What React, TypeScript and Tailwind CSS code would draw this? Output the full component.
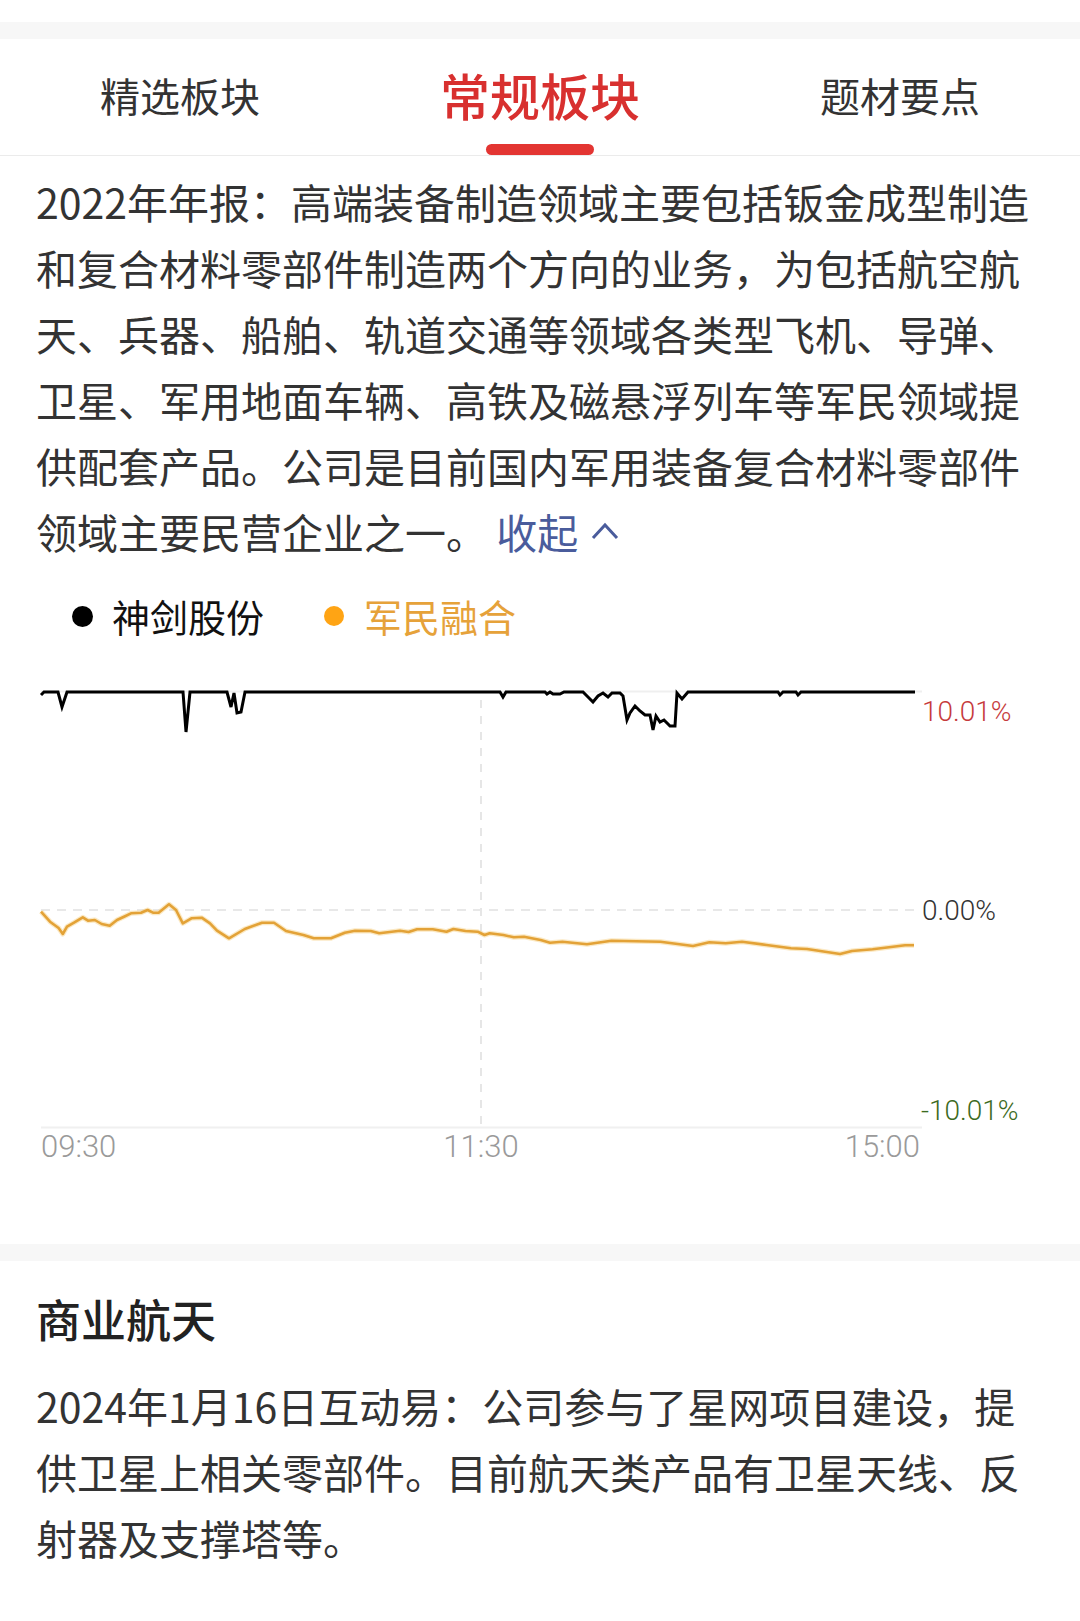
import React from "react";

const TABS = ["精选板块", "常规板块", "题材要点"];

// 神剑股份: pinned at limit-up most of the day, with a few dips
const STOCK: [number, number][] = [
  [41, 695], [44, 692], [58, 692], [62, 707], [67, 692],
  [183, 692], [186, 732], [190, 692],
  [227, 692], [231, 707], [234, 693], [237, 713], [241, 712], [245, 692],
  [500, 692], [503, 697], [506, 692],
  [545, 692], [547, 694], [550, 692], [553, 694], [560, 694], [564, 692],
  [583, 692], [588, 697], [593, 702], [598, 696], [603, 693], [608, 697], [612, 693],
  [620, 693], [623, 696], [627, 720], [630, 713], [635, 706], [640, 711], [645, 715],
  [650, 715], [653, 730], [656, 716], [660, 722], [664, 720], [667, 723], [670, 726],
  [675, 726], [677, 693], [682, 699], [688, 692],
  [778, 692], [780, 695], [783, 692],
  [796, 692], [798, 695], [801, 692],
  [915, 692],
];

// 军民融合 sector index
const SECTOR: [number, number][] = [
  [41, 911.7], [50, 921.7], [58.6, 928], [62.8, 934], [67, 926.7], [74, 922.7],
  [82.8, 917.3], [88, 920.7], [94.8, 920], [101.7, 924], [109.7, 925.7], [117, 920],
  [124, 916.7], [131, 913.3], [141, 912.7], [147.6, 910], [153, 912.7], [158.6, 912.7],
  [169, 904.3], [176, 910], [182.8, 923.3], [191.4, 918.3], [201.7, 917.7], [210, 923.3],
  [217, 930.7], [229, 938.3], [244.8, 929], [262, 922.7], [274, 922.7], [286, 931],
  [303.4, 935], [313.8, 938.3], [331, 938.3], [344.8, 932.7], [355, 930.7], [370.7, 931],
  [379.3, 933.3], [400, 930.7], [408.6, 932], [417, 929.3], [432.8, 929.3], [446.5, 931.7],
  [453.4, 929], [465.5, 931], [477.6, 931.7], [484.5, 935], [489.7, 933.3], [503.4, 935],
  [513.8, 937.3], [524, 936.7], [540.7, 940], [550, 942.7], [562.4, 941.7], [587, 944.3],
  [611.4, 940.7], [660.4, 941.7], [693, 946], [709.4, 942.3], [725.7, 943.3], [742, 941.7],
  [766.5, 945], [791, 948.3], [807, 949], [840, 954], [852, 951], [872.6, 949.3],
  [889, 947.3], [905, 945.3], [914, 945.3],
];

const pts = (p: [number, number][]) => p.map(([x, y]) => `${x},${y}`).join(" ");

function Chart() {
  return (
    <svg width={1080} height={584} className="block">
      <g transform="translate(0,-660)">
        {/* grid */}
        <line x1={41} y1={691.5} x2={922} y2={691.5} stroke="#efefef" strokeWidth={2} />
        <line x1={41} y1={910} x2={915} y2={910} stroke="#e8e8e8" strokeWidth={2} strokeDasharray="9 7" />
        <line x1={481} y1={700} x2={481} y2={1126} stroke="#e6e6e6" strokeWidth={2} strokeDasharray="8 8" />
        <line x1={41} y1={1127.5} x2={922} y2={1127.5} stroke="#f0f0f0" strokeWidth={2} />

        {/* series */}
        <polyline points={pts(SECTOR)} fill="none" stroke="#f7d38a" strokeWidth={5} strokeOpacity={0.5} strokeLinejoin="round" />
        <polyline points={pts(SECTOR)} fill="none" stroke="#e3a237" strokeWidth={2.6} strokeLinejoin="round" />
        <polyline points={pts(STOCK)} fill="none" stroke="#000" strokeWidth={3} strokeLinejoin="miter" />

        {/* axis labels */}
        <g fontFamily="Roboto, 'Liberation Sans', sans-serif" fontWeight={300}>
          <text x={922} y={711} fontSize={28} fill="#c63a3c" dominantBaseline="central">10.01%</text>
          <text x={922} y={910} fontSize={28} fill="#333" dominantBaseline="central">0.00%</text>
          <text x={921} y={1110} fontSize={28} fill="#3c6a22" dominantBaseline="central">-10.01%</text>
          <text x={41} y={1146} fontSize={31} fill="#9a9a9a" dominantBaseline="central">09:30</text>
          <text x={481} y={1146} fontSize={31} fill="#9a9a9a" dominantBaseline="central" textAnchor="middle">11:30</text>
          <text x={920} y={1146} fontSize={31} fill="#9a9a9a" dominantBaseline="central" textAnchor="end">15:00</text>
        </g>
      </g>
    </svg>
  );
}

export default function App() {
  return (
    <div className="min-h-[1621px] w-[1080px] bg-white font-['Noto_Sans_CJK_SC',sans-serif] text-[#333]">
      <div className="h-[22px]" />
      <div className="h-[17px] bg-[#f7f7f7]" />

      {/* Tabs */}
      <div className="flex h-[117px] border-b border-[#ebebeb]">
        {TABS.map((t, i) => (
          <div key={t} className="relative flex flex-1 items-center justify-center pb-[5px]">
            <span
              className={
                i === 1
                  ? "-mt-[2px] text-[50px] leading-none font-medium text-[#d8302f]"
                  : "text-[40px] leading-none text-[#333]"
              }
            >
              {t}
            </span>
            {i === 1 && (
              <div className="absolute bottom-0 h-[11px] w-[108px] rounded-full bg-[#e33532]" />
            )}
          </div>
        ))}
      </div>

      {/* Description */}
      <p className="px-[36px] pt-[12px] text-[41px] leading-[66px]">
        2022年年报：高端装备制造领域主要包括钣金成型制造和复合材料零部件制造两个方向的业务，为包括航空航天、兵器、船舶、轨道交通等领域各类型飞机、导弹、卫星、军用地面车辆、高铁及磁悬浮列车等军民领域提供配套产品。公司是目前国内军用装备复合材料零部件领域主要民营企业之一。{" "}
        <span className="inline-flex items-center gap-[12px] text-[#4a5c9c]">
          <span>收起</span>
          <svg width={30} height={20} viewBox="0 0 30 20" className="block">
            <polyline points="3,17 15,4 27,17" fill="none" stroke="#4a5c9c" strokeWidth={3} />
          </svg>
        </span>
      </p>

      {/* Legend */}
      <div className="flex h-[96px] items-center pt-[8px] pl-[72px] text-[38px] leading-none">
        <span className="h-[21px] w-[21px] rounded-full bg-black" />
        <span className="ml-[19px] text-[#111]">神剑股份</span>
        <span className="ml-[60px] h-[20px] w-[20px] rounded-full bg-[#ffa414]" />
        <span className="ml-[20px] text-[#e6a23a]">军民融合</span>
      </div>

      <Chart />

      <div className="h-[17px] bg-[#f7f7f7]" />

      {/* Theme point */}
      <div className="px-[36px] pt-[28px]">
        <h2 className="text-[45px] leading-[60px] font-medium text-[#222]">商业航天</h2>
        <p className="mt-[23px] text-[41px] leading-[66px]">
          2024年1月16日互动易：公司参与了星网项目建设，提供卫星上相关零部件。目前航天类产品有卫星天线、反射器及支撑塔等。
        </p>
      </div>
    </div>
  );
}
